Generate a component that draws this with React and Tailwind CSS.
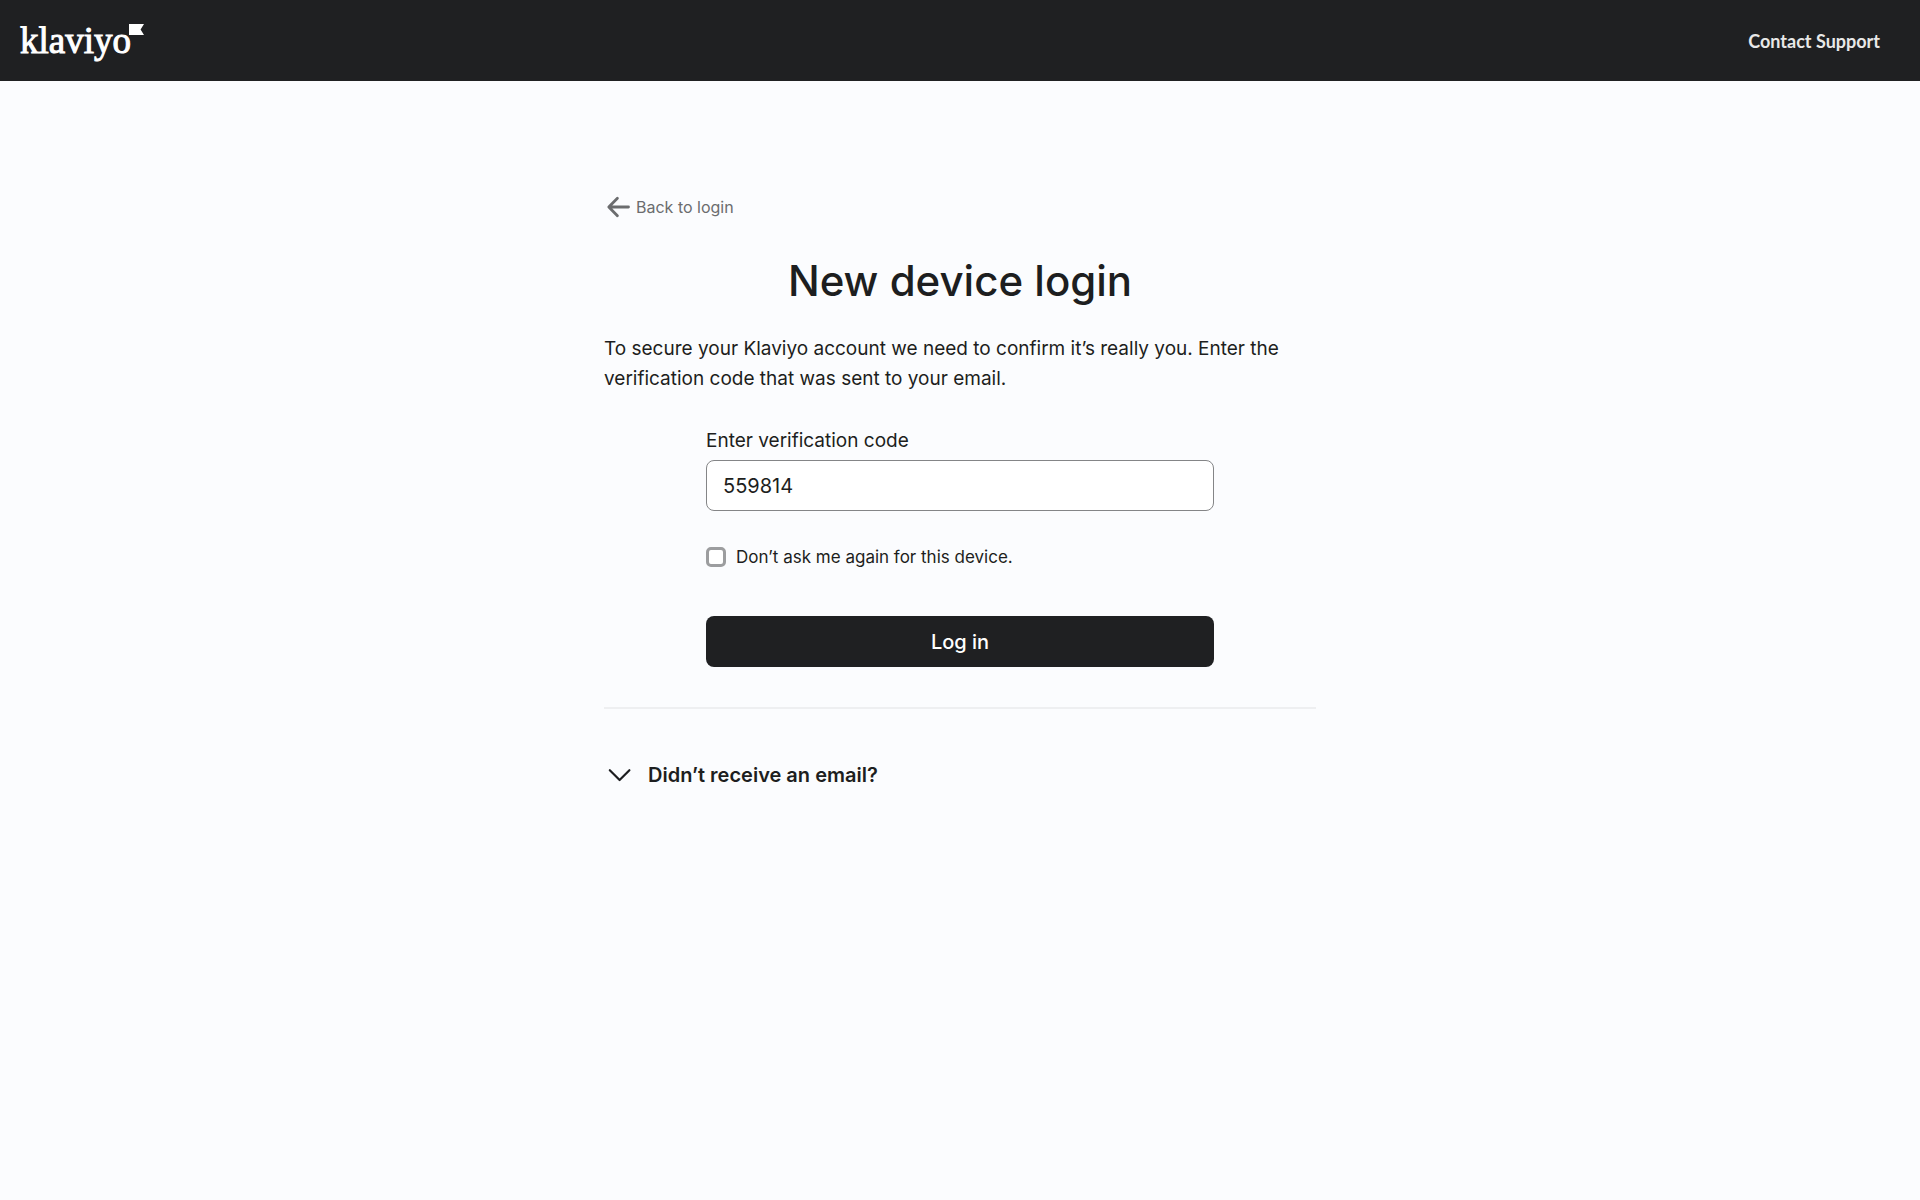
function Logo() {
  return (
    <a href="#home" aria-label="klaviyo" className="flex items-start text-white">
      <span className="font-['Liberation_Serif',serif] text-[37px] leading-[42px] [-webkit-text-stroke:1px_white]">klaviyo</span>
      <svg className="mt-1 -ml-0.5" width="15" height="11" viewBox="0 0 15 11" fill="currentColor" aria-hidden="true">
        <path d="M0 0H15L11.6 5.5L15 11H0Z" />
      </svg>
    </a>
  );
}

function ArrowLeft() {
  return (
    <svg width="28" height="28" viewBox="0 0 28 28" fill="none" stroke="currentColor" strokeWidth="2.8" strokeLinecap="round" strokeLinejoin="round" aria-hidden="true">
      <path d="M13.4 5.2L4.8 14L13.4 22.8M5.2 14H24.5" />
    </svg>
  );
}

function ChevronDown() {
  return (
    <svg width="30" height="30" viewBox="0 0 30 30" fill="none" stroke="currentColor" strokeWidth="2.2" strokeLinecap="round" strokeLinejoin="round" aria-hidden="true">
      <path d="M5.8 10.2L15.6 20L25.4 10.2" />
    </svg>
  );
}

export default function App() {
  return (
    <div className="min-h-screen bg-[#fbfcfe] font-['Inter',sans-serif] text-[#1d1e20]">
      <header className="flex h-[81px] items-center justify-between bg-[#1f2022] pl-5 pr-10">
        <Logo />
        <a href="#support" className="font-['Lato',sans-serif] text-[18px] leading-6 font-bold text-[#e8e8e8]">
          Contact Support
        </a>
      </header>
      <main className="mx-auto max-w-[712px] pt-28">
        <a href="#login" className="inline-flex items-center gap-1 text-[16px] leading-7 text-[#6b6c6e]">
          <ArrowLeft />
          Back to login
        </a>
        <h1 className="mt-6 text-center text-[42px] leading-[60px] font-medium">New device login</h1>
        <p className="mt-[23px] text-[19px] leading-[30px]">
          To secure your Klaviyo account we need to confirm it’s really you. Enter the verification code that was sent to your email.
        </p>
        <form className="mx-auto mt-8 max-w-[508px]" onSubmit={(e) => e.preventDefault()}>
          <label htmlFor="code" className="block text-[19px] leading-[30px]">
            Enter verification code
          </label>
          <input
            id="code"
            type="text"
            defaultValue="559814"
            className="mt-1 block h-[51px] w-full rounded-lg border border-[#848587] bg-white px-4 text-[20px] outline-none"
          />
          <div className="mt-8 flex items-center gap-2.5">
            <input
              id="remember"
              type="checkbox"
              className="size-5 appearance-none rounded-[5px] border-3 border-[#9c9d9f] bg-white checked:bg-[#1f2022]"
            />
            <label htmlFor="remember" className="text-[17px] leading-7">
              Don’t ask me again for this device.
            </label>
          </div>
          <button type="submit" className="mt-[45px] block h-[51px] w-full rounded-lg bg-[#1f2022] text-[20px] font-medium text-white">
            Log in
          </button>
        </form>
        <hr className="mt-10 border-t-2 border-[#eeeff1]" />
        <button type="button" aria-expanded="false" className="mt-[51px] flex items-center gap-3.5 text-[20px] leading-[30px] font-semibold">
          <ChevronDown />
          Didn’t receive an email?
        </button>
      </main>
    </div>
  );
}
